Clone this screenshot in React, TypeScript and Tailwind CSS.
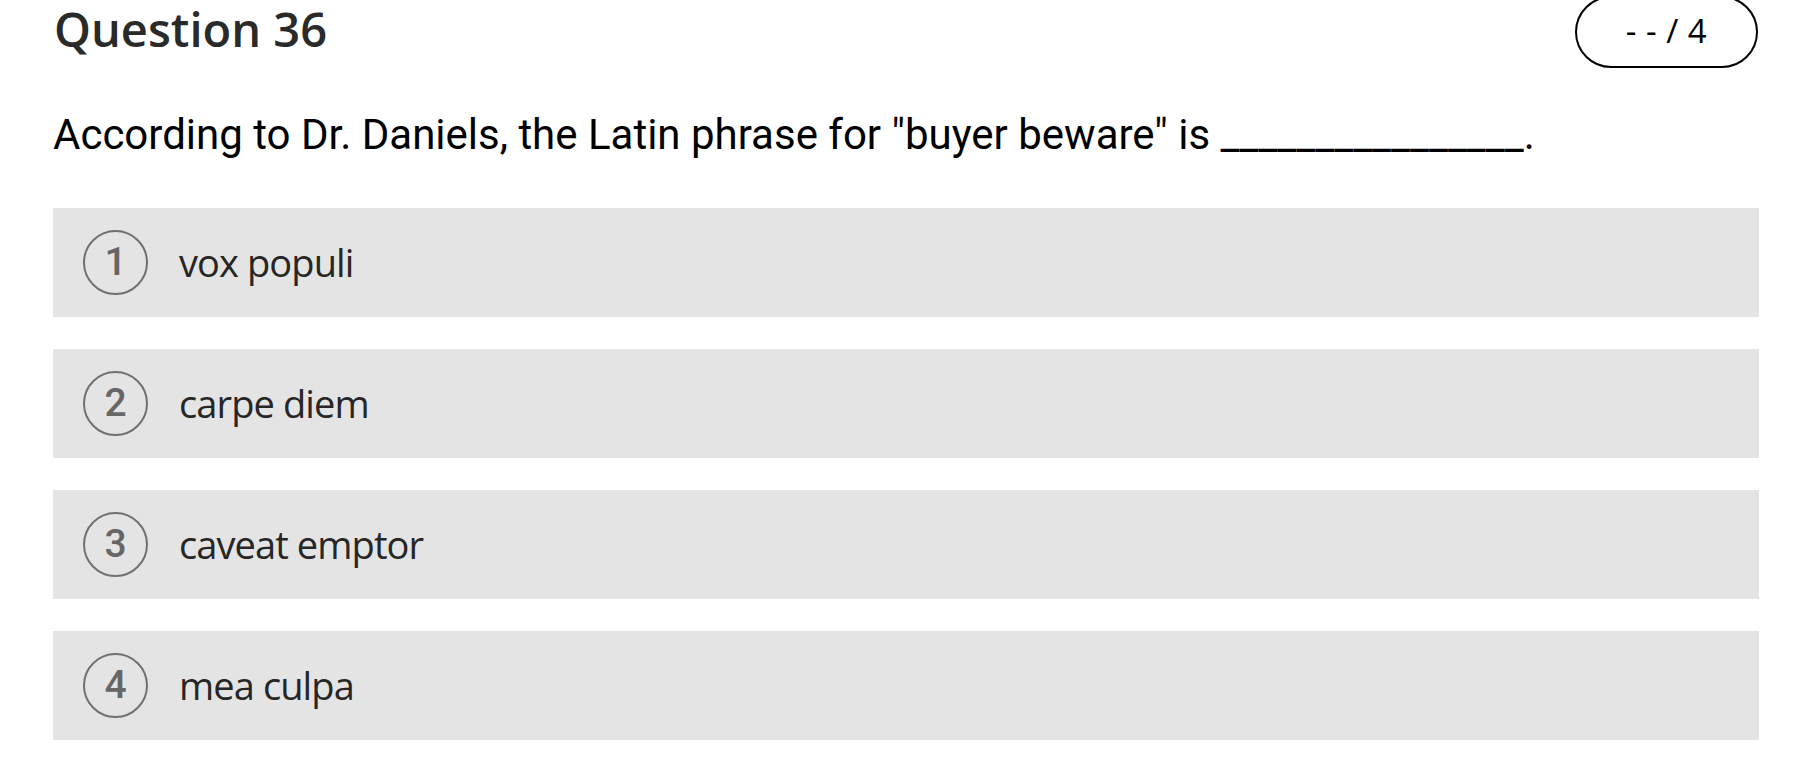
import React from 'react';

const options = [
  { id: 1, label: 'vox populi' },
  { id: 2, label: 'carpe diem' },
  { id: 3, label: 'caveat emptor' },
  { id: 4, label: 'mea culpa' },
];

const App: React.FC = () => {
  return (
    <div className="min-h-screen bg-white px-[53px] overflow-hidden">
      {/* Header */}
      <div className="flex items-start justify-between">
        <h1 className="-mt-[3px] pl-[1px] text-[47px] leading-[64px] font-semibold text-[#2a2a2a] font-['Open_Sans',sans-serif]">
          Question 36
        </h1>
        <div className="-mt-[4px] mr-[1px] flex h-[72px] w-[183px] items-center justify-center rounded-full border-2 border-black font-['Open_Sans',sans-serif] text-[33px] font-medium text-black">
          <span className="pb-[2px] tracking-[0.5px]">- - / 4</span>
        </div>
      </div>

      {/* Question */}
      <p className="mt-[42px] text-[42px] leading-[50px] text-black font-['Roboto',sans-serif]">
        According to Dr. Daniels, the Latin phrase for "buyer beware" is ________________.
      </p>

      {/* Options */}
      <div className="mt-[48px] flex flex-col gap-[32px]">
        {options.map(option => (
          <div
            key={option.id}
            className="flex h-[109px] items-center gap-[31px] bg-[#e4e4e4] pl-[30px]"
          >
            <div className="flex h-[65px] w-[65px] shrink-0 items-center justify-center rounded-full border-2 border-[#707070]">
              <span className="text-[39px] font-medium leading-none text-[#666666] font-['Roboto',sans-serif]">
                {option.id}
              </span>
            </div>
            <span className="text-[38px] tracking-[-0.9px] text-[#262626] font-['Open_Sans',sans-serif]">
              {option.label}
            </span>
          </div>
        ))}
      </div>
    </div>
  );
};

export default App;
